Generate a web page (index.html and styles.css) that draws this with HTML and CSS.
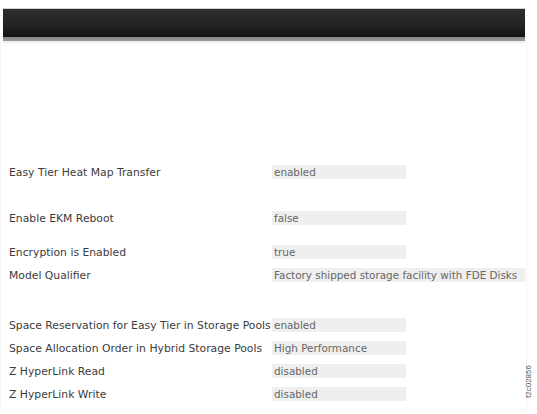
FILE: index.html
```html
<!DOCTYPE html>
<html lang="en">
<head>
  <meta charset="UTF-8">
  <title>Advanced Settings</title>
  <link rel="stylesheet" href="styles.css">
</head>
<body>
  <div class="topbar"></div>

  <div class="panel">
    <div class="row first">
      <span class="label">Easy Tier Heat Map Transfer</span>
      <span class="value">enabled</span>
    </div>
    <div class="row gap-lg">
      <span class="label">Enable EKM Reboot</span>
      <span class="value">false</span>
    </div>
    <div class="row gap-sm">
      <span class="label">Encryption is Enabled</span>
      <span class="value">true</span>
    </div>
    <div class="row">
      <span class="label">Model Qualifier</span>
      <span class="value wide">Factory shipped storage facility with FDE Disks</span>
    </div>
    <div class="row gap-xl">
      <span class="label">Space Reservation for Easy Tier in Storage Pools</span>
      <span class="value">enabled</span>
    </div>
    <div class="row">
      <span class="label">Space Allocation Order in Hybrid Storage Pools</span>
      <span class="value">High Performance</span>
    </div>
    <div class="row">
      <span class="label">Z HyperLink Read</span>
      <span class="value">disabled</span>
    </div>
    <div class="row">
      <span class="label">Z HyperLink Write</span>
      <span class="value">disabled</span>
    </div>

    <div class="fig-id">f2c02856</div>
  </div>
</body>
</html>
```

FILE: styles.css
```css
body {
  margin: 0;
  background: #fff;
  font-family: "DejaVu Sans", Verdana, sans-serif;
  font-size: 10.8px;
}
.topbar {
  margin: 8px 12px 0 3px;
  height: 32px;
  border-top: 1px solid #d0d0d0;
  background: linear-gradient(to bottom, #2e2e2e 0%, #232323 50%, #151515 87%, #8a8a8a 89%, #9a9a9a 100%);
  box-shadow: 0 2px 2px rgba(0, 0, 0, 0.08);
}
.panel {
  display: flow-root;
  position: relative;
  margin-right: 10px;
  height: 370px;
  border-right: 1px solid #f2f2f2;
  border-left: 1px solid #f4f4f4;
}
.row {
  display: flex;
  align-items: center;
  height: 14px;
  margin-top: 9px;
}
.row.first {
  margin-top: 124px;
}
.row.gap-lg {
  margin-top: 32px;
}
.row.gap-sm {
  margin-top: 20px;
}
.row.gap-xl {
  margin-top: 36px;
}
.label {
  width: 263px;
  padding-left: 8px;
  color: #3c3c3c;
  white-space: nowrap;
}
.value {
  width: 132px;
  height: 14px;
  line-height: 14px;
  padding-left: 2px;
  background: #efefef;
  color: #666;
  font-size: 10.4px;
  white-space: nowrap;
  overflow: hidden;
}
.value.wide {
  width: 251px;
}
.fig-id {
  position: absolute;
  left: 507px;
  top: 336px;
  width: 40px;
  height: 9px;
  line-height: 9px;
  text-align: center;
  transform: rotate(-90deg);
  font-family: "Liberation Sans", Arial, sans-serif;
  font-size: 8px;
  color: #555;
}
```
